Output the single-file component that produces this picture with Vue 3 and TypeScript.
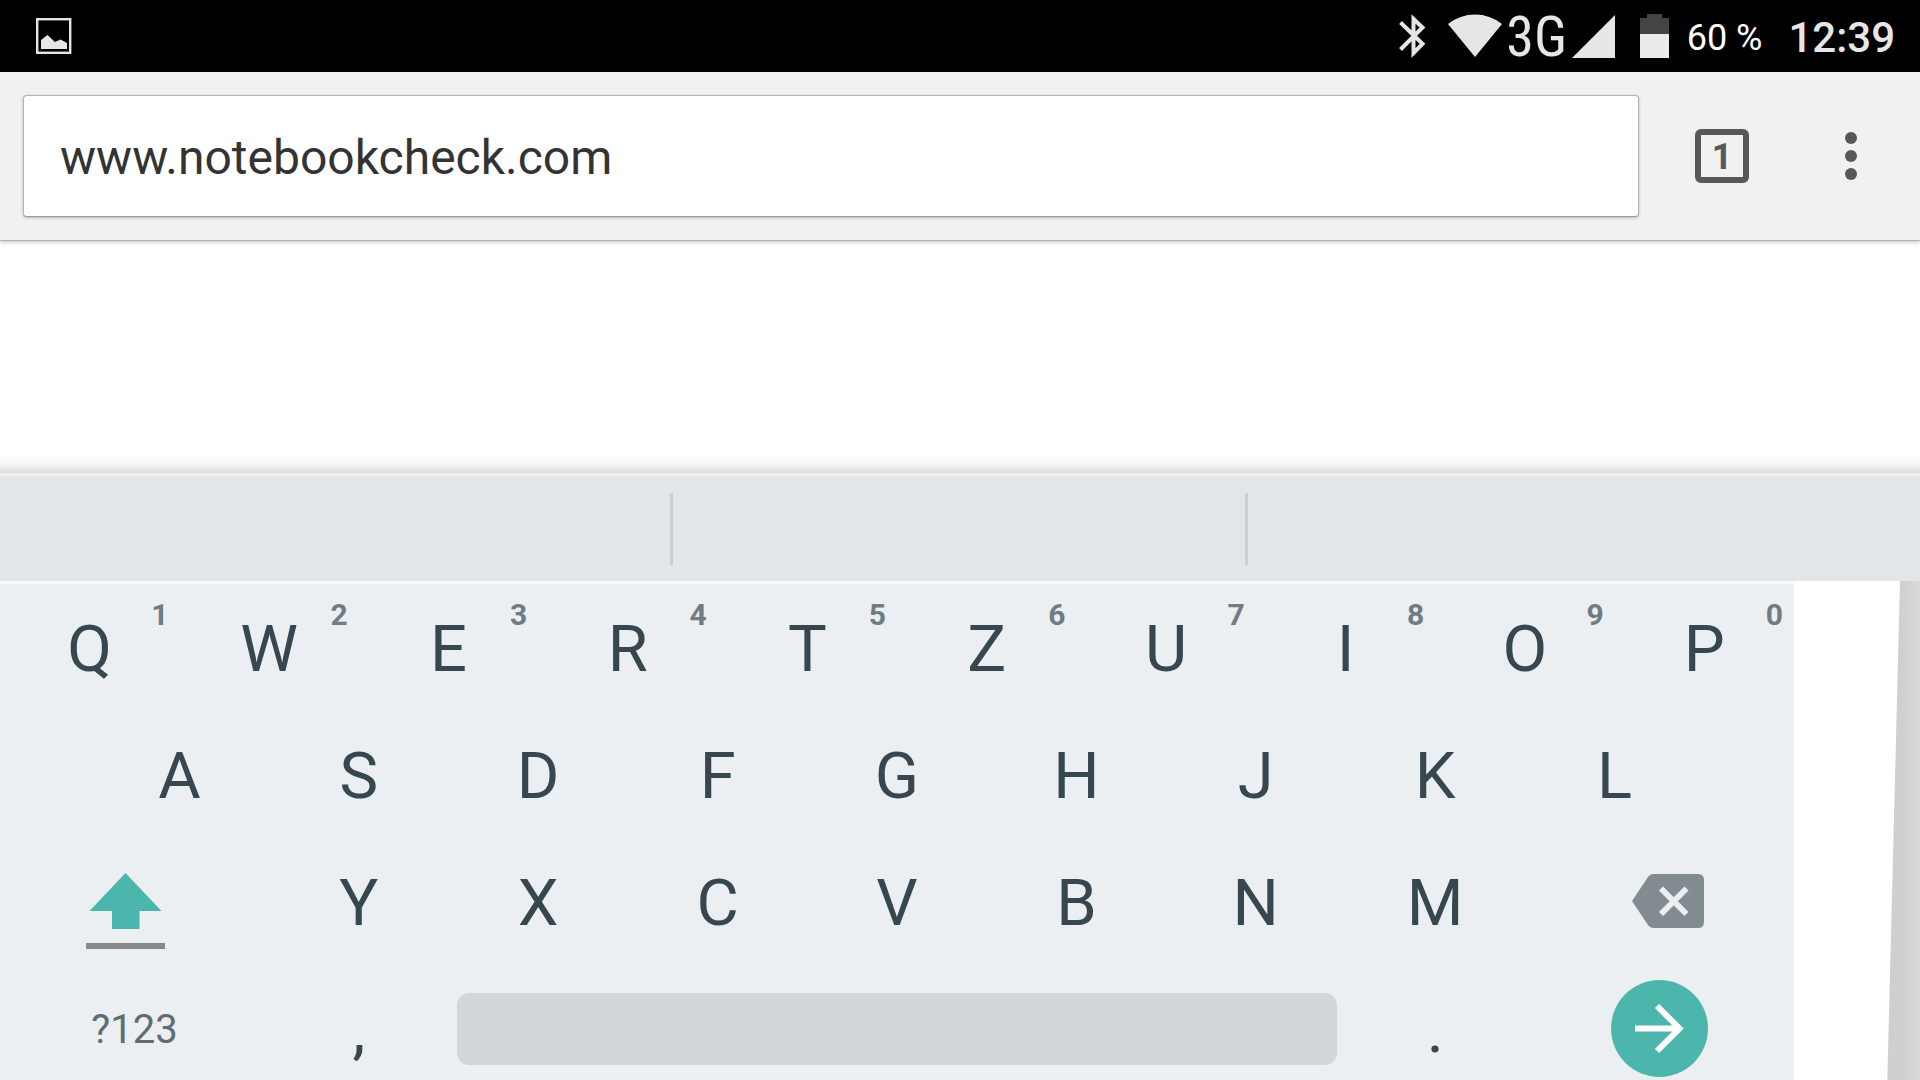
<script setup lang="ts">
import { ref } from 'vue'

interface LetterKey {
  label: string
  hint?: string
}

const url = ref('www.notebookcheck.com')

const topRow: LetterKey[] = 'QWERTZUIOP'.split('').map((label, i) => ({
  label,
  hint: String((i + 1) % 10),
}))
const homeRow: LetterKey[] = 'ASDFGHJKL'.split('').map((label) => ({ label }))
const bottomRow: LetterKey[] = 'YXCVBNM'.split('').map((label) => ({ label }))
</script>

<template>
  <div class="screen">
    <header class="status">
      <svg class="picture" width="36" height="36" viewBox="0 0 36 36" aria-hidden="true">
        <rect x="1.2" y="1.2" width="33" height="33.6" fill="none" stroke="#e6e6e6" stroke-width="2.4" />
        <path d="M5 22 L11.500 17 L19 24 L24.500 21.500 L31 25 V31 H5Z" fill="#e6e6e6" />
      </svg>
      <div class="indicators">
        <svg class="bluetooth" width="28" height="44" viewBox="0 0 28 44" aria-hidden="true">
          <path d="M1.500 8.500 L23.500 29.800 L14.500 39 V5 L23.500 13.500 L1.500 35.500" fill="none" stroke="#e6e6e6" stroke-width="4" />
        </svg>
        <svg class="wifi" width="54" height="44" viewBox="0 0 54 44" aria-hidden="true">
          <path d="M0 10 Q12 .5 27 .5 T54 10 L27 43Z" fill="#e6e6e6" />
        </svg>
        <span class="network">3G</span>
        <svg class="signal" width="43" height="43" viewBox="0 0 43 43" aria-hidden="true">
          <path d="M43 0 V43 H0Z" fill="#e6e6e6" />
        </svg>
        <svg class="battery" width="29" height="44" viewBox="0 0 29 44" aria-hidden="true">
          <path d="M7 0 H22 V4 H29 V20 H0 V4 H7Z" fill="#444" />
          <path d="M0 20 H29 V44 H0Z" fill="#ebebeb" />
        </svg>
        <span class="percent">60 %</span>
        <time class="clock">12:39</time>
      </div>
    </header>

    <nav class="toolbar">
      <input v-model="url" class="address" type="text" aria-label="Address" spellcheck="false" />
      <button class="tabs" type="button" aria-label="Open tabs">1</button>
      <button class="menu" type="button" aria-label="Menu">
        <svg width="12" height="48" viewBox="0 0 12 48" aria-hidden="true">
          <circle cx="6" cy="6" r="6" fill="#585858" />
          <circle cx="6" cy="24" r="6" fill="#585858" />
          <circle cx="6" cy="42" r="6" fill="#585858" />
        </svg>
      </button>
    </nav>

    <main class="page"></main>

    <section class="input-panel">
      <div class="suggestions">
        <span class="slot first"></span>
        <span class="slot"></span>
        <span class="slot last"></span>
      </div>
      <div class="lower">
        <div class="keyboard">
          <div class="row">
            <button v-for="key in topRow" :key="key.label" class="key letter" type="button">
              {{ key.label }}<span class="hint">{{ key.hint }}</span>
            </button>
          </div>
          <div class="row home">
            <button v-for="key in homeRow" :key="key.label" class="key letter" type="button">{{ key.label }}</button>
          </div>
          <div class="row">
            <button class="key wide shift" type="button" aria-label="Shift">
              <svg width="80" height="76" viewBox="0 0 80 76" aria-hidden="true">
                <path d="M39.500 0 L75.500 38 H53.500 V56 H26 V38 H3.500Z" fill="#4db6ac" />
                <path d="M0 70 H79 V76 H0Z" fill="#818b90" />
              </svg>
            </button>
            <button v-for="key in bottomRow" :key="key.label" class="key letter" type="button">{{ key.label }}</button>
            <button class="key wide delete" type="button" aria-label="Delete">
              <svg width="72" height="54" viewBox="0 0 72 54" aria-hidden="true">
                <path d="M21 0 H66 Q72 0 72 6 V48 Q72 54 66 54 H21 Q18 54 16 51 L0 27 L16 3 Q18 0 21 0Z" fill="#818b90" />
                <path d="M29 14.500 L54.500 40 M54.500 14.500 L29 40" stroke="#ebeff2" stroke-width="6" />
              </svg>
            </button>
          </div>
          <div class="row">
            <button class="key letter wide symbols" type="button">?123</button>
            <button class="key letter" type="button">,</button>
            <button class="key space" type="button" aria-label="Space"><span class="bar"></span></button>
            <button class="key letter" type="button">.</button>
            <button class="key wide" type="button" aria-label="Go">
              <svg width="97" height="97" viewBox="0 0 97 97" aria-hidden="true">
                <circle cx="48.500" cy="48.500" r="48.500" fill="#4db6ac" />
                <path d="M24 48.500 H67 M46 26 L68.500 48.500 L46 71" fill="none" stroke="#fff" stroke-width="6" />
              </svg>
            </button>
          </div>
        </div>
        <div class="edge"></div>
      </div>
    </section>
  </div>
</template>

<style>
body {
  margin: 0;
}
</style>

<style scoped>
.screen {
  display: flex;
  flex-direction: column;
  height: 100vh;
  overflow: hidden;
  background: #fff;
  font-family: Roboto, "Noto Sans", sans-serif;
}

.screen svg {
  display: block;
  flex: none;
}

button {
  padding: 0;
  border: 0;
  background: none;
  font-family: inherit;
}

.status {
  display: flex;
  flex: none;
  align-items: center;
  justify-content: space-between;
  height: 72px;
  padding: 0 25px 0 36px;
  background: #000;
  color: #e6e6e6;
}

.indicators {
  display: flex;
  align-items: center;
}

.wifi {
  margin-left: 21px;
}

.network {
  width: 70px;
  padding-top: 2px;
  font-family: "Noto Sans Condensed", "Roboto Condensed", Roboto, sans-serif;
  font-size: 56px;
  line-height: 70px;
  text-align: center;
}

.battery {
  margin-left: 25px;
}

.percent {
  margin-left: 18px;
  padding-top: 4px;
  color: #fff;
  font-size: 36px;
}

.clock {
  margin-left: 26px;
  padding-top: 2px;
  font-size: 42px;
  font-weight: 500;
}

.toolbar {
  position: relative;
  display: flex;
  flex: none;
  align-items: center;
  box-sizing: border-box;
  height: 169px;
  padding: 0 36px 0 23px;
  border-bottom: 1px solid #b3b4b4;
  background: #f1f1f1;
  box-shadow: 0 1px 4px rgba(0, 0, 0, 0.25);
}

.address {
  flex: 1;
  min-width: 0;
  box-sizing: border-box;
  height: 122px;
  padding: 2px 36px 0;
  border: 1px solid #b3b4b4;
  border-bottom-color: #989a9a;
  border-radius: 4px;
  outline: 0;
  background: #fff;
  box-shadow: 0 1px 3px rgba(0, 0, 0, 0.25);
  color: #333;
  font-family: inherit;
  font-size: 48px;
}

.tabs {
  box-sizing: border-box;
  width: 54px;
  height: 54px;
  margin-left: 56px;
  padding-top: 2px;
  border: 6px solid #585858;
  border-radius: 6px;
  color: #585858;
  font-size: 36px;
  font-weight: 700;
  line-height: 40px;
}

.menu {
  display: flex;
  justify-content: center;
  width: 66px;
  margin-left: 69px;
}

.page {
  flex: 1;
  min-height: 0;
}

.input-panel {
  flex: none;
  height: 607px;
}

.suggestions {
  position: relative;
  display: flex;
  align-items: center;
  box-sizing: border-box;
  height: 108px;
  border-top: 3px solid #eff0f1;
  background: #e2e6e9;
}

.suggestions::before {
  position: absolute;
  right: 0;
  bottom: 100%;
  left: 0;
  height: 18px;
  margin-bottom: 3px;
  background: linear-gradient(to bottom, rgba(0, 0, 0, 0), rgba(0, 0, 0, 0.04) 50%, rgba(0, 0, 0, 0.14));
  content: "";
}

.slot {
  flex: 572;
  height: 72px;
  box-sizing: border-box;
}

.slot.first {
  flex: 670;
}

.slot.last {
  flex: 672;
}

.slot + .slot {
  border-left: 3px solid #cbcfd2;
}

.lower {
  display: flex;
}

.keyboard {
  flex: 1;
  border-top: 3px solid #f6f8fa;
  background: #ebeff2;
}

.row {
  display: grid;
  grid-template-columns: repeat(20, minmax(0, 1fr));
  height: 127px;
}

.home {
  grid-template-columns: repeat(18, minmax(0, 1fr));
  padding: 0 5%;
}

.key {
  position: relative;
  display: flex;
  grid-column: span 2;
  align-items: center;
  justify-content: center;
}

.letter {
  padding-top: 2px;
  color: #37474f;
  font-size: 65px;
  line-height: 78px;
}

.wide {
  grid-column: span 3;
}

.space {
  grid-column: span 10;
  padding: 0 9px;
}

.bar {
  flex: 1;
  height: 72px;
  border-radius: 12px;
  background: #d1d6d9;
}

.hint {
  position: absolute;
  top: 13px;
  right: 11px;
  color: #717c82;
  font-size: 30px;
  font-weight: 700;
  line-height: 36px;
}

.shift {
  padding: 19px 18px 0 0;
}

.delete {
  padding: 0 0 2px 18px;
}

.symbols {
  color: #5f6c72;
  font-size: 40px;
}

.edge {
  width: 126px;
  background: linear-gradient(to right, #cfcfcf 85%, #dadada);
  clip-path: polygon(106px 0, 100% 0, 100% 100%, 93px 100%);
}
</style>
